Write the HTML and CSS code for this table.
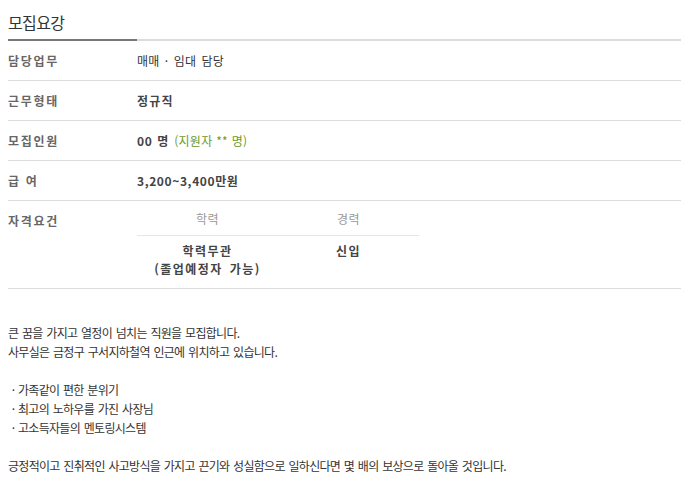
FILE: index.html
```html
<!DOCTYPE html>
<html lang="ko">
<head>
<meta charset="utf-8">
<title>모집요강</title>
<link rel="stylesheet" href="styles.css">
</head>
<body>
<div class="recruit">
  <div class="title-bar"><h2 class="title">모집요강</h2></div>
  <div class="info">
    <div class="row">
      <div class="label">담당업무</div>
      <div class="value">매매 · 임대 담당</div>
    </div>
    <div class="row">
      <div class="label">근무형태</div>
      <div class="value strong">정규직</div>
    </div>
    <div class="row">
      <div class="label">모집인원</div>
      <div class="value"><b class="strong num">00 명</b> <span class="applicants">(지원자 ** 명)</span></div>
    </div>
    <div class="row">
      <div class="label">급 여</div>
      <div class="value strong num">3,200~3,400만원</div>
    </div>
    <div class="row row-tall">
      <div class="label label-top">자격요건</div>
      <div class="value value-top">
        <div class="qual">
          <div class="qual-head">학력</div>
          <div class="qual-head">경력</div>
          <div class="qual-cell">학력무관<br>(졸업예정자 가능)</div>
          <div class="qual-cell">신입</div>
        </div>
      </div>
    </div>
  </div>
  <div class="desc">
    <p>큰 꿈을 가지고 열정이 넘치는 직원을 모집합니다.<br>사무실은 금정구 구서지하철역 인근에 위치하고 있습니다.</p>
    <ul class="points">
      <li>가족같이 편한 분위기</li>
      <li>최고의 노하우를 가진 사장님</li>
      <li>고소득자들의 멘토링시스템</li>
    </ul>
    <p>긍정적이고 진취적인 사고방식을 가지고 끈기와 성실함으로 일하신다면 몇 배의 보상으로 돌아올 것입니다.</p>
  </div>
</div>
</body>
</html>
```

FILE: styles.css
```css
html, body {
  background: #fff;
}
body {
  margin: 8px;
  font-family: "Noto Sans CJK KR", "Noto Sans", sans-serif;
  color: #333;
  font-size: 12px;
}
.recruit {
  width: 681px;
}
.title-bar {
  height: 31px;
  border-bottom: 2px solid #dcdcdc;
}
.title {
  display: inline-block;
  box-sizing: border-box;
  width: 129px;
  height: 33px;
  margin: 0;
  padding-top: 2px;
  border-bottom: 2px solid #777;
  font-size: 16px;
  font-weight: normal;
  line-height: 24px;
  letter-spacing: -0.6px;
  color: #333;
}
.row {
  display: grid;
  grid-template-columns: 129px 1fr;
  height: 39px;
  align-items: center;
  border-bottom: 1px solid #dcdcdc;
  line-height: 18px;
}
.label {
  font-weight: bold;
  color: #666;
  letter-spacing: 1.7px;
}
.value {
  color: #333;
  letter-spacing: 0.3px;
  word-spacing: 1.5px;
}
.strong {
  font-weight: bold;
  color: #444;
  letter-spacing: 1.2px;
  word-spacing: 1px;
}
.num {
  letter-spacing: 0.6px;
}
.applicants {
  color: #6b9a2a;
  letter-spacing: 0.3px;
  word-spacing: 0;
}
.row-tall {
  height: 87px;
  align-items: start;
}
.label-top {
  padding-top: 11px;
}
.qual {
  display: grid;
  grid-template-columns: 141px 141px;
  width: 282px;
  text-align: center;
}
.qual-head {
  box-sizing: border-box;
  height: 35px;
  padding-top: 2px;
  line-height: 32px;
  color: #999;
  letter-spacing: 0.5px;
  border-bottom: 1px solid #e6e6e6;
}
.qual-cell {
  padding-top: 6px;
  font-weight: bold;
  color: #444;
  letter-spacing: 1.5px;
  word-spacing: 2px;
}
.desc {
  margin-top: 34px;
  line-height: 19px;
  letter-spacing: -0.7px;
  word-spacing: 1px;
  color: #333;
}
.desc p {
  margin: 0;
}
.points {
  list-style: none;
  margin: 19px 0;
  padding: 0;
}
.points li::before {
  content: "·";
  display: inline-block;
  width: 10px;
  text-align: center;
}
```
